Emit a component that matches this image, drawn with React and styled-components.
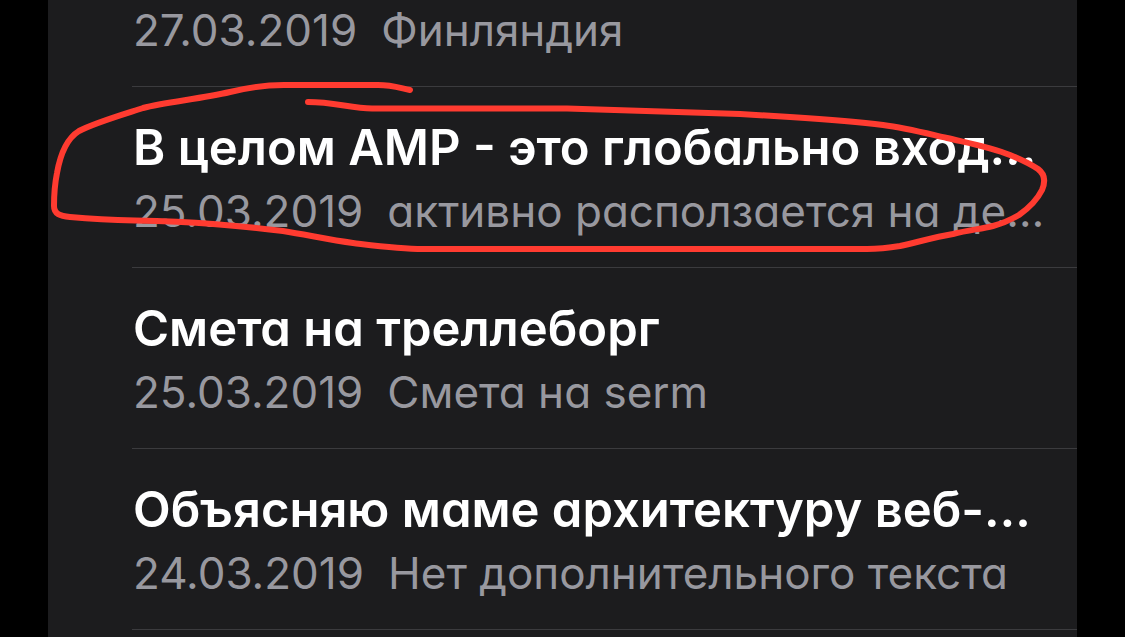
import React from "react";
import styled, { createGlobalStyle } from "styled-components";

const GlobalStyle = createGlobalStyle`
  body {
    margin: 0;
    background: #000000;
    font-family: Inter, "Noto Sans", sans-serif;
    font-feature-settings: "cv11" 1;
  }
`;

const Screen = styled.main`
  position: relative;
  box-sizing: border-box;
  height: 100vh;
  overflow: hidden;
  padding: 0 48px;
`;

const NoteList = styled.ul`
  box-sizing: border-box;
  min-height: 100%;
  margin: 0;
  padding: 0 0 0 84px;
  list-style: none;
  background: #1c1c1e;
`;

const NoteRow = styled.li`
  padding: ${(p) => (p.$partial ? "0" : "28px")} 0 26px 1px;
  border-bottom: 1px solid #3b3b3e;
  white-space: nowrap;
`;

const NoteTitle = styled.h2`
  margin: 0;
  font-size: 49px;
  line-height: 66px;
  font-weight: 600;
  color: #ffffff;
`;

const NoteMeta = styled.p`
  display: flex;
  gap: 24px;
  margin: 0;
  font-size: 44px;
  line-height: 60px;
  color: #98989f;
`;

const Marker = styled.svg`
  position: absolute;
  top: 0;
  left: 0;
  pointer-events: none;
`;

const notes = [
  { date: "27.03.2019", text: "Финляндия" },
  { title: "В целом AMP - это глобально вход…", date: "25.03.2019", text: "активно расползается на де…" },
  { title: "Смета на треллеборг", date: "25.03.2019", text: "Смета на serm" },
  { title: "Объясняю маме архитектуру веб-…", date: "24.03.2019", text: "Нет дополнительного текста" },
];

export default function App() {
  return (
    <Screen>
      <GlobalStyle />
      <NoteList>
        {notes.map((note) => (
          <NoteRow key={note.text} $partial={!note.title}>
            {note.title && <NoteTitle>{note.title}</NoteTitle>}
            <NoteMeta>
              <time>{note.date}</time>
              <span>{note.text}</span>
            </NoteMeta>
          </NoteRow>
        ))}
      </NoteList>
      <Marker width="1125" height="280" viewBox="0 0 1125 280" fill="none" aria-hidden="true">
        <path
          d="M410 90C400 88 392 85 378 85H284C264 85 246 88 230 92C200 99 165 102 143 108C118 116 94 123 79 131C66 139 60 156 57 173C55 183 54 195 54 206C54 214 60 216 70 217C92 219 112 220 135 220.500C162 221 188 222 213 224C238 226 260 228 283 231C308 235 330 240 353 243C378 246 400 249 423 249H867C879 249 888 248 900 246C918 242 935 237 953 234C969 230 981 229 993 226C1004 223 1012 219 1019 215C1029 208 1037 200 1042 190C1045 183 1046 175 1038 169C1029 163 1020 159 1010 155C990 147 968 143 947 138C925 133 906 128 883 125C853 121 822 119 790 117L740 114L567 108.500H372C351 108 333 102 308 102"
          stroke="#ff3b30"
          strokeWidth="6"
          strokeLinecap="round"
          strokeLinejoin="round"
        />
      </Marker>
    </Screen>
  );
}
